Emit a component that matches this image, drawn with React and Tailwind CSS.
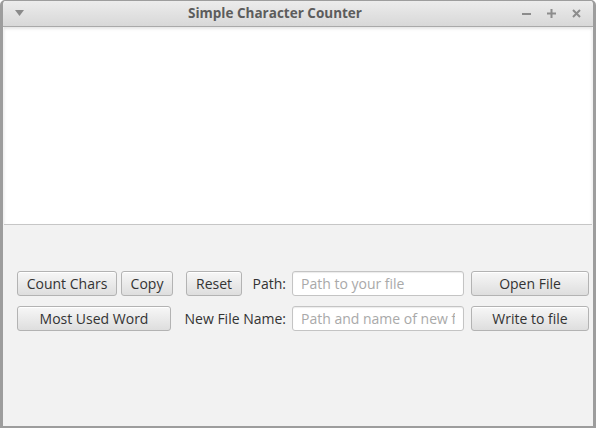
import React from "react";

const font = { fontFamily: '"Open Sans", "DejaVu Sans", sans-serif' };

const btn =
  "h-[25px] shrink-0 flex items-center justify-center rounded-[3px] border border-[#b3b3b3] bg-gradient-to-b from-[#f7f7f7] to-[#dedede] text-[14px] text-[#333] shadow-[inset_0_1px_0_#ffffff]";
const field =
  "h-[25px] w-[172px] shrink-0 rounded-[3px] border border-[#c4c4c4] bg-white px-[8px] text-[14px] text-[#333] placeholder:text-[#a9a9a9] outline-none shadow-[inset_0_1px_1px_#ececec]";

function TitleBar() {
  return (
    <div className="relative h-[26px] flex items-center justify-center pr-[46px] rounded-t-[5px] bg-gradient-to-b from-[#ececec] to-[#d8d8d8] border-b border-[#a9a9a9]">
      <svg className="absolute left-[12px] top-[9px]" width="9" height="6" viewBox="0 0 9 6">
        <path d="M0 0 H9 L4.5 6 Z" fill="#8a8a8a" />
      </svg>
      <span className="text-[13.5px] font-bold text-[#5c5c5c]">Simple Character Counter</span>
      <div className="absolute right-[12px] top-0 h-full flex items-center gap-[16px]">
        <svg width="9" height="9" viewBox="0 0 9 9">
          <rect x="0" y="4" width="9" height="2" fill="#8c8c8c" />
        </svg>
        <svg width="9" height="9" viewBox="0 0 9 9">
          <rect x="0" y="3.5" width="9" height="2" fill="#8c8c8c" />
          <rect x="3.5" y="0" width="2" height="9" fill="#8c8c8c" />
        </svg>
        <svg width="9" height="9" viewBox="0 0 9 9">
          <path d="M1 1 L8 8 M8 1 L1 8" stroke="#8c8c8c" strokeWidth="2" />
        </svg>
      </div>
    </div>
  );
}

export default function App() {
  return (
    <div className="w-[596px] h-[428px] bg-white" style={font}>
      <div className="w-full h-full flex flex-col rounded-t-[5px] border-x-[3px] border-b-[2px] border-t border-[#9d9d9d] bg-[#f2f2f2] overflow-hidden">
        <TitleBar />
        <div className="flex-1 flex flex-col pl-[1px] pr-[1px]">
          <textarea className="h-[198px] w-full resize-none bg-white border-b border-[#c6c6c6] outline-none shadow-[inset_0_2px_3px_#e6e6e6]" />
          <div className="flex flex-col gap-[10px] pt-[46px] pl-[13px]">
            <div className="flex items-center">
              <button className={`${btn} w-[100px] border-[#1a9fd6] shadow-[inset_0_0_0_1px_#bfe3f3]`}>Count Chars</button>
              <button className={`${btn} w-[52px] ml-[4px]`}>Copy</button>
              <button className={`${btn} w-[56px] ml-[13px]`}>Reset</button>
              <span className="w-[44px] shrink-0 text-right text-[14px] text-[#333]">Path:</span>
              <input className={`${field} ml-[6px]`} placeholder="Path to your file" />
              <button className={`${btn} w-[118px] ml-[7px]`}>Open File</button>
            </div>
            <div className="flex items-center">
              <button className={`${btn} w-[154px]`}>Most Used Word</button>
              <span className="w-[115px] shrink-0 text-right text-[14px] text-[#333] whitespace-nowrap">New File Name:</span>
              <input className={`${field} ml-[6px]`} placeholder="Path and name of new file" />
              <button className={`${btn} w-[118px] ml-[7px]`}>Write to file</button>
            </div>
          </div>
        </div>
      </div>
    </div>
  );
}
